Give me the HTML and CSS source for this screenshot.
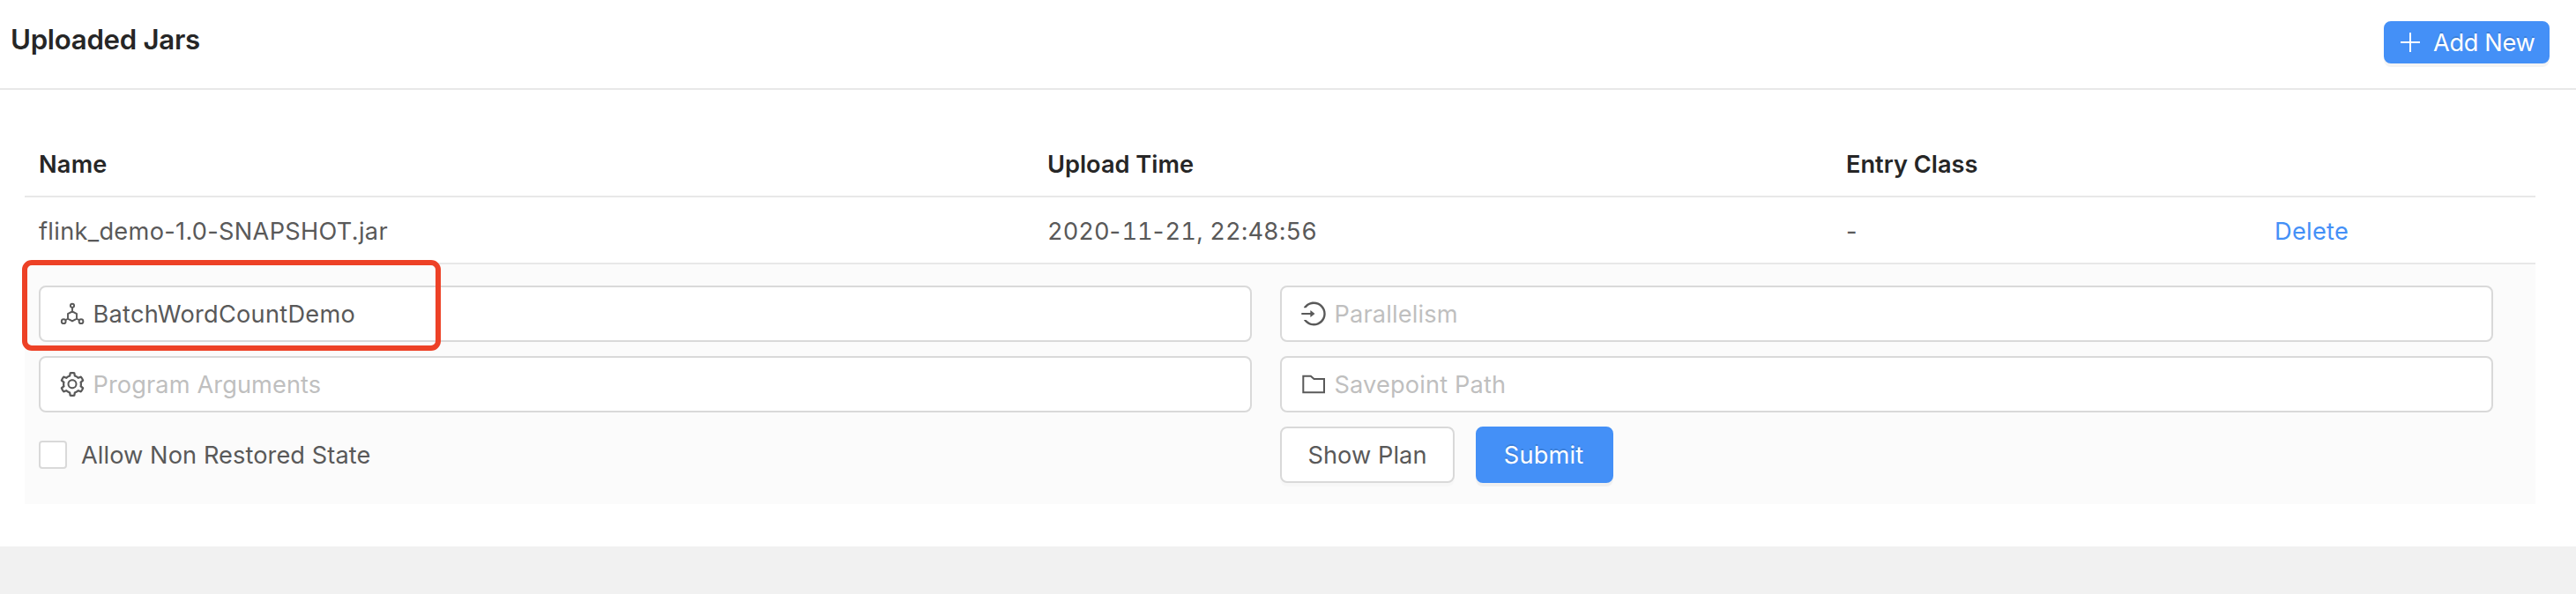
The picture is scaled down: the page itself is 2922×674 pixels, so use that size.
FILE: index.html
```
<!DOCTYPE html>
<html lang="en">
<head>
<meta charset="utf-8">
<title>Uploaded Jars</title>
<link rel="stylesheet" href="styles.css">
</head>
<body>
<main class="card">
  <header class="card-head">
    <h1 class="title">Uploaded Jars</h1>
    <button class="btn btn-primary btn-add" type="button">
      <svg class="plus" viewBox="0 0 22 22"><path d="M0 11h22M11 0v22"/></svg>
      <span class="t-add">Add New</span>
    </button>
  </header>
  <section class="card-body">
    <div class="row row-head">
      <div class="cell"><span class="t-name">Name</span></div>
      <div class="cell"><span>Upload Time</span></div>
      <div class="cell"><span>Entry Class</span></div>
      <div class="cell"></div>
    </div>
    <div class="row row-data">
      <div class="cell"><span class="t-file">flink_demo-1.0-SNAPSHOT.jar</span></div>
      <div class="cell"><span class="t-date">2020<b class="dash">-</b>11<b class="dash">-</b>21<b class="sep">, </b>22<b class="sep">:</b>48<b class="sep">:</b>56</span></div>
      <div class="cell"><span>-</span></div>
      <div class="cell"><a class="link">Delete</a></div>
    </div>
    <form class="panel">
      <div class="field">
        <svg class="icon" viewBox="0 0 32 32"><g fill="none" stroke="currentColor" stroke-width="1.9"><circle cx="16" cy="6.8" r="2.1"/><circle cx="6.2" cy="24.7" r="2.4"/><circle cx="26" cy="24.7" r="2.4"/><path d="M16 13.3l5 2.8v5.5l-5 2.800-5-2.800v-5.500zM16 9v4.300M11 21.500l-2.800 1.800M21 21.500l2.800 1.800"/></g></svg>
        <span class="t-class">BatchWordCountDemo</span>
        <i class="highlight"></i>
      </div>
      <div class="field">
        <svg class="icon" viewBox="0 0 1024 1024"><path d="M521.7 82c-152.5-.4-286.7 78.5-363.4 197.7-3.4 5.3.4 12.3 6.7 12.3h70.3c4.8 0 9.3-2.1 12.3-5.8 7-8.5 14.5-16.7 22.4-24.5 32.6-32.5 70.5-58.1 112.7-75.9 43.6-18.4 90-27.8 137.9-27.8 47.9 0 94.3 9.3 137.9 27.8 42.2 17.8 80.1 43.4 112.7 75.9 32.6 32.5 58.1 70.4 76 112.5C865.7 417.8 875 464.1 875 512c0 47.9-9.4 94.2-27.8 137.8-17.8 42.1-43.4 80-76 112.5s-70.5 58.1-112.7 75.9A352.8 352.8 0 0 1 520.6 866c-47.9 0-94.3-9.4-137.9-27.8A353.84 353.84 0 0 1 270 762.3c-7.9-7.9-15.3-16.1-22.4-24.5-3-3.7-7.6-5.8-12.3-5.8H165c-6.3 0-10.2 7-6.7 12.3C234.9 863.2 368.5 942 520.6 942c236.2 0 428-190.1 430.4-425.6C953.4 277.1 761.3 82.6 521.7 82zM395 624v-80H81c-4.400 0-8-3.600-8-8v-48c0-4.400 3.600-8 8-8h314v-80c0-6.700 7.800-10.500 13-6.300l141.900 112a8 8 0 0 1 0 12.600l-141.900 112c-5.200 4.200-13 .4-13-6.300z"/></svg>
        <span class="hint">Parallelism</span>
      </div>
      <div class="field">
        <svg class="icon" viewBox="0 0 1024 1024"><path fill-rule="evenodd" d="M924.800 625.700l-65.500-56c3.100-19 4.700-38.400 4.700-57.800s-1.600-38.800-4.700-57.800l65.500-56a32.030 32.030 0 0 0 9.300-35.200l-.9-2.600a443.740 443.740 0 0 0-79.700-137.900l-1.800-2.100a32.120 32.120 0 0 0-35.100-9.500l-81.300 28.900c-30-24.600-63.500-44-99.700-57.600l-15.700-85a32.050 32.050 0 0 0-25.800-25.700l-2.700-.5c-52.100-9.400-106.900-9.400-159 0l-2.700.5a32.050 32.050 0 0 0-25.800 25.700l-15.800 85.400a351.860 351.860 0 0 0-99 57.400l-81.900-29.100a32 32 0 0 0-35.100 9.500l-1.800 2.100a446.020 446.020 0 0 0-79.700 137.900l-.9 2.600c-4.500 12.500-.8 26.500 9.300 35.200l66.300 56.600c-3.100 18.800-4.600 38-4.600 57.100 0 19.200 1.500 38.400 4.600 57.100L99 625.500a32.030 32.030 0 0 0-9.300 35.200l.9 2.600c18.100 50.400 44.900 96.900 79.700 137.900l1.800 2.100a32.120 32.120 0 0 0 35.100 9.500l81.900-29.100c29.800 24.500 63.100 43.900 99 57.400l15.800 85.400a32.050 32.050 0 0 0 25.800 25.700l2.700.5a449.400 449.400 0 0 0 159 0l2.700-.5a32.050 32.050 0 0 0 25.800-25.700l15.700-85a350 350 0 0 0 99.700-57.600l81.300 28.900a32 32 0 0 0 35.100-9.500l1.800-2.100c34.800-41.100 61.600-87.500 79.700-137.900l.9-2.600c4.500-12.300.8-26.300-9.300-35zM788.300 465.900c2.500 15.100 3.800 30.600 3.800 46.100s-1.300 31-3.800 46.100l-6.600 40.100 74.700 63.900a370.030 370.030 0 0 1-42.600 73.600L721 702.800l-31.400 25.800c-23.900 19.600-50.500 35-79.300 45.800l-38.100 14.300-17.900 97a377.500 377.500 0 0 1-85 0l-17.900-97.200-37.800-14.500c-28.500-10.800-55-26.200-78.700-45.700l-31.400-25.900-93.400 33.200c-17-22.900-31.200-47.600-42.600-73.600l75.500-64.500-6.500-40c-2.400-14.900-3.700-30.300-3.700-45.500 0-15.300 1.200-30.600 3.700-45.500l6.500-40-75.500-64.500c11.300-26.100 25.600-50.700 42.600-73.600l93.400 33.200 31.400-25.900c23.700-19.500 50.200-34.900 78.700-45.700l37.900-14.300 17.900-97.200c28.100-3.200 56.800-3.200 85 0l17.900 97 38.100 14.300c28.700 10.800 55.400 26.200 79.300 45.800l31.400 25.800 92.800-32.900c17 22.900 31.200 47.600 42.600 73.600L781.800 426zM512 326c-97.200 0-176 78.800-176 176s78.800 176 176 176 176-78.800 176-176-78.800-176-176-176zM512 390a112 112 0 0 1 0 224 112 112 0 0 1 0-224z"/></svg>
        <span class="hint t-args">Program Arguments</span>
      </div>
      <div class="field">
        <svg class="icon" viewBox="0 0 32 32"><path fill="none" stroke="currentColor" stroke-width="2" d="M4.300 6.700h8.500l3.700 3.300h11.500v15.300H4.300z"/></svg>
        <span class="hint t-save">Savepoint Path</span>
      </div>
      <label class="check"><i class="box"></i><span class="t-allow">Allow Non Restored State</span></label>
      <div class="actions">
        <button class="btn btn-default" type="button"><span class="t-plan">Show Plan</span></button>
        <button class="btn btn-primary btn-submit" type="button"><span class="t-submit">Submit</span></button>
      </div>
    </form>
  </section>
</main>
</body>
</html>
```
FILE: styles.css
```
* { box-sizing: border-box; }

body {
  margin: 0;
  background: #f1f1f1;
  color: #595959;
  font: 27.2px/32px Inter, "Liberation Sans", sans-serif;
}

span, a { white-space: nowrap; }

.card { height: 620px; background: #fff; }

.card-head {
  display: flex;
  justify-content: space-between;
  align-items: flex-start;
  height: 102px;
  padding: 24px 30px 0 12px;
  border-bottom: 2px solid #e8e8e8;
}

.title {
  margin: 0;
  color: #262626;
  font-size: 31.2px;
  font-weight: 600;
  line-height: 43px;
  letter-spacing: -0.28px;
}

.card-body { padding: 48px 46px 0 28px; }

.row {
  display: grid;
  grid-template-columns: 1144px 906px 486px 1fr;
  align-items: center;
  border-bottom: 2px solid #e8e8e8;
}
.row-head { height: 74px; color: #262626; font-weight: 600; }
.row-data { height: 76px; padding-top: 2px; }
.cell { padding: 2px 16px 0; }
.link { color: #4490f7; letter-spacing: 0.29px; }

.panel {
  display: grid;
  grid-template-columns: 1fr 1fr;
  gap: 16px 32px;
  height: 272px;
  padding: 24px 48px 24px 16px;
  background: #fbfbfb;
}

.field {
  position: relative;
  display: flex;
  align-items: center;
  gap: 7.5px;
  height: 64px;
  padding-left: 20px;
  border: 2px solid #d9d9d9;
  border-radius: 8px;
  background: #fff;
}
.icon { width: 32px; height: 32px; fill: currentColor; }
.hint { color: #bfbfbf; letter-spacing: 0.15px; }
.field span, .check span, .btn span { padding-top: 2px; }

.highlight {
  position: absolute;
  top: -31px;
  left: -21px;
  width: 475px;
  height: 103px;
  border: 6px solid #ed4126;
  border-radius: 11px;
}

.check { display: flex; align-items: center; gap: 16px; height: 64px; }
.box {
  width: 32px;
  height: 32px;
  border: 2px solid #d9d9d9;
  border-radius: 4px;
  background: #fff;
}

.actions { display: flex; gap: 24px; }

.btn {
  display: flex;
  align-items: center;
  justify-content: center;
  height: 64px;
  padding: 0;
  border: 2px solid #d9d9d9;
  border-radius: 8px;
  background: #fff;
  color: #595959;
  font: inherit;
  box-shadow: 0 4px 0 rgba(0, 0, 0, 0.016);
}
.btn-default { width: 198px; }
.btn-primary {
  border-color: #4490f7;
  background: #4490f7;
  color: #fff;
  text-shadow: 0 -2px 0 rgba(0, 0, 0, 0.12);
  box-shadow: 0 4px 0 rgba(0, 0, 0, 0.045);
}
.btn-submit { width: 156px; padding-right: 2px; }
.btn-add { justify-content: flex-start; gap: 15px; width: 188px; height: 48px; padding-left: 17px; }
.plus { width: 22px; height: 22px; fill: none; stroke: #fff; stroke-width: 2; }

.t-name { letter-spacing: 0.19px; }
.t-file { letter-spacing: 0.3px; }
.t-date { font-feature-settings: "tnum"; }
.dash, .sep { font-weight: 400; font-feature-settings: normal; }
.dash { letter-spacing: 1.4px; }
.t-class { letter-spacing: 0.26px; }
.t-args { letter-spacing: 0.1px; }
.t-save { letter-spacing: 0.15px; }
.t-allow { letter-spacing: 0.08px; }
.t-plan { letter-spacing: 0.07px; }
.t-submit { letter-spacing: 0.15px; }
.t-add { letter-spacing: -0.34px; }
```
